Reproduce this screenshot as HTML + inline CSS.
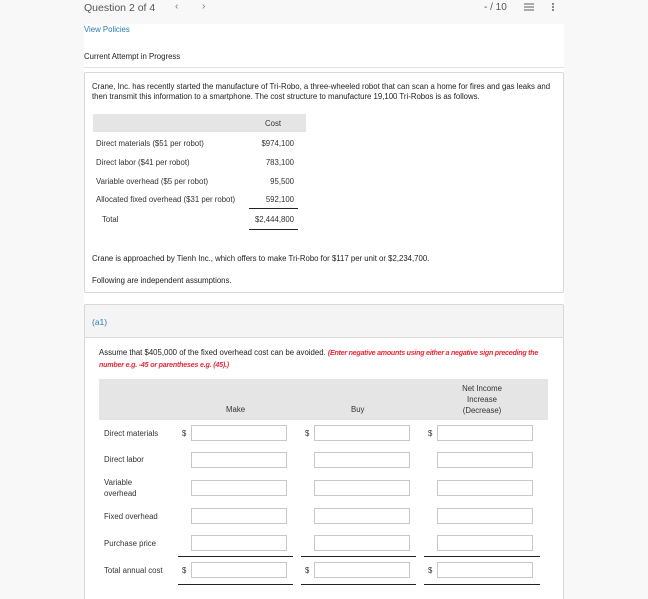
<!DOCTYPE html>
<html><head><style>
*{margin:0;padding:0;box-sizing:border-box}
html,body{width:648px;height:599px;overflow:hidden}
body{background:#f8f8f8;font-family:"Liberation Sans",sans-serif;color:#333;position:relative}
.a{position:absolute;white-space:nowrap}
.s{font-size:7.8px}
.inp{position:absolute;width:96px;height:16px;border:1px solid #c8c8c8;background:#fff}
.ln{position:absolute;height:1px;background:#222}
</style></head><body>
<div class="a" style="left:84px;top:2px;font-size:10.5px;color:#555">Question 2 of 4</div>
<div class="a" style="left:175px;top:1px;font-size:10px;color:#777">&#8249;</div>
<div class="a" style="left:202px;top:1px;font-size:10px;color:#777">&#8250;</div>
<div class="a" style="left:484px;top:2px;font-size:10px;color:#555">- / 10</div>
<div class="a" style="left:524px;top:3px;width:10px;height:1.5px;background:#aaa;box-shadow:0 3px 0 #aaa,0 6px 0 #aaa"></div>
<div class="a" style="left:552px;top:3px;width:2px;height:2px;background:#888;box-shadow:0 3px 0 #888,0 6px 0 #888"></div>
<div class="a" style="left:84px;top:24px;width:480px;height:575px;background:#fff"></div>
<div class="a s" style="left:84px;top:25px;color:#2a7ab0">View Policies</div>
<div class="a s" style="left:84px;top:52px;color:#222">Current Attempt in Progress</div>
<div class="a" style="left:84px;top:67px;width:480px;height:1px;background:#e2e2e2"></div>
<div class="a" style="left:84px;top:72px;width:480px;height:221px;border:1px solid #d8d8d8;border-radius:2px"></div>
<div class="a s" style="left:92px;top:82px;line-height:10px;color:#222">Crane, Inc. has recently started the manufacture of Tri-Robo, a three-wheeled robot that can scan a home for fires and gas leaks and<br>then transmit this information to a smartphone. The cost structure to manufacture 19,100 Tri-Robos is as follows.</div>
<div class="a" style="left:93px;top:114px;width:213px;height:18px;background:#e5e5e5"></div>
<div class="a s" style="left:265px;top:119px">Cost</div>
<div class="a s" style="left:96px;top:139px">Direct materials ($51 per robot)</div>
<div class="a s" style="left:96px;top:158px">Direct labor ($41 per robot)</div>
<div class="a s" style="left:96px;top:177px">Variable overhead ($5 per robot)</div>
<div class="a s" style="left:96px;top:195px">Allocated fixed overhead ($31 per robot)</div>
<div class="a s" style="left:102px;top:215px">Total</div>
<div class="a s" style="left:244px;top:139px;width:50px;text-align:right">$974,100</div>
<div class="a s" style="left:244px;top:158px;width:50px;text-align:right">783,100</div>
<div class="a s" style="left:244px;top:177px;width:50px;text-align:right">95,500</div>
<div class="a s" style="left:244px;top:195px;width:50px;text-align:right">592,100</div>
<div class="a s" style="left:244px;top:215px;width:50px;text-align:right">$2,444,800</div>
<div class="ln" style="left:249px;top:208px;width:49px"></div>
<div class="ln" style="left:249px;top:229px;width:49px"></div>
<div class="a s" style="left:92px;top:254px;color:#222">Crane is approached by Tienh Inc., which offers to make Tri-Robo for $117 per unit or $2,234,700.</div>
<div class="a s" style="left:92px;top:276px;color:#222">Following are independent assumptions.</div>
<div class="a" style="left:84px;top:304px;width:480px;height:320px;border:1px solid #d8d8d8;border-radius:2px"></div>
<div class="a" style="left:85px;top:305px;width:478px;height:33px;background:#f4f4f4;border-bottom:1px solid #ddd"></div>
<div class="a" style="left:92px;top:317px;font-size:8.5px;color:#2a7ab0">(a1)</div>
<div class="a s" style="left:99px;top:347px;line-height:11px;color:#222">Assume that $405,000 of the fixed overhead cost can be avoided. <i style="color:#e8283a;font-weight:bold;letter-spacing:-0.25px;font-size:7.1px">(Enter negative amounts using either a negative sign preceding the</i><br><i style="color:#e8283a;font-weight:bold;font-size:7.1px;letter-spacing:-0.2px">number e.g. -45 or parentheses e.g. (45).)</i></div>
<div class="a" style="left:99px;top:379px;width:449px;height:41px;background:#e5e5e5"></div>
<div class="a s" style="left:226px;top:405px">Make</div>
<div class="a s" style="left:351px;top:405px">Buy</div>
<div class="a s" style="left:452px;top:383px;width:60px;text-align:center;line-height:11px">Net Income<br>Increase<br>(Decrease)</div>
<div class="a s" style="left:104px;top:429px">Direct materials</div>
<div class="a s" style="left:104px;top:455px">Direct labor</div>
<div class="a s" style="left:104px;top:478px;line-height:10.5px">Variable<br>overhead</div>
<div class="a s" style="left:104px;top:512px">Fixed overhead</div>
<div class="a s" style="left:104px;top:539px">Purchase price</div>
<div class="a s" style="left:104px;top:566px">Total annual cost</div>
<div class="a s" style="left:182px;top:429px">$</div><div class="a s" style="left:305px;top:429px">$</div><div class="a s" style="left:428px;top:429px">$</div>
<div class="a s" style="left:182px;top:566px">$</div><div class="a s" style="left:305px;top:566px">$</div><div class="a s" style="left:428px;top:566px">$</div>
<div class="inp" style="left:191px;top:425px"></div><div class="inp" style="left:314px;top:425px"></div><div class="inp" style="left:437px;top:425px"></div>
<div class="inp" style="left:191px;top:452px"></div><div class="inp" style="left:314px;top:452px"></div><div class="inp" style="left:437px;top:452px"></div>
<div class="inp" style="left:191px;top:480px"></div><div class="inp" style="left:314px;top:480px"></div><div class="inp" style="left:437px;top:480px"></div>
<div class="inp" style="left:191px;top:508px"></div><div class="inp" style="left:314px;top:508px"></div><div class="inp" style="left:437px;top:508px"></div>
<div class="inp" style="left:191px;top:535px"></div><div class="inp" style="left:314px;top:535px"></div><div class="inp" style="left:437px;top:535px"></div>
<div class="inp" style="left:191px;top:562px"></div><div class="inp" style="left:314px;top:562px"></div><div class="inp" style="left:437px;top:562px"></div>
<div class="ln" style="left:178px;top:556px;width:115px"></div><div class="ln" style="left:301px;top:556px;width:115px"></div><div class="ln" style="left:424px;top:556px;width:116px"></div>
<div class="ln" style="left:178px;top:584px;width:115px"></div><div class="ln" style="left:301px;top:584px;width:115px"></div><div class="ln" style="left:424px;top:584px;width:116px"></div>
</body></html>
